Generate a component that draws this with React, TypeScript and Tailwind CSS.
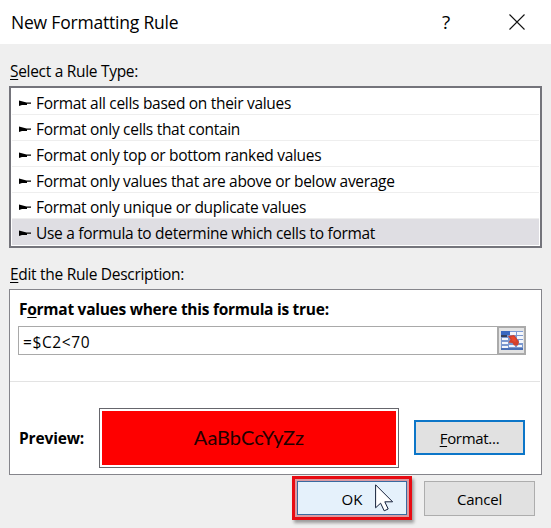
import React, { useState } from 'react';

const ruleTypes = [
  'Format all cells based on their values',
  'Format only cells that contain',
  'Format only top or bottom ranked values',
  'Format only values that are above or below average',
  'Format only unique or duplicate values',
  'Use a formula to determine which cells to format',
];

const PointerIcon = () => (
  <svg className="w-3 h-[7px] shrink-0" viewBox="0 0 12 7">
    <path d="M0 0.5 L7.5 2.5 H12 V3.7 H8 V5 H3 L0 6 Z" fill="#000" />
  </svg>
);

const CloseIcon = () => (
  <svg className="w-4 h-4" viewBox="0 0 16 16">
    <path d="M0.5 0.5 L15.5 15.5 M15.5 0.5 L0.5 15.5" stroke="#111" strokeWidth="1.1" fill="none" />
  </svg>
);

const RangePickerIcon = () => (
  <svg className="w-[22px] h-[19px]" viewBox="0 0 22 19">
    <rect width="22" height="19" fill="#7b98cf" />
    <rect width="9" height="4" fill="#3a68c0" />
    <rect x="9" width="13" height="1" fill="#7d9cd8" />
    <rect y="4" width="6" height="2" fill="#33415f" />
    <g fill="#f3f6fc">
      <rect x="9" y="1" width="6" height="3" />
      <rect x="16" y="1" width="6" height="3" />
      <rect x="1" y="7" width="6" height="2" />
      <rect x="16" y="5" width="6" height="3" />
      <rect x="1" y="11" width="6" height="2" />
      <rect x="18" y="9" width="4" height="3" />
      <rect x="1" y="15" width="6" height="2" />
      <rect x="8" y="14" width="6" height="2" />
      <rect x="16" y="14" width="5" height="2" />
    </g>
    <rect y="17" width="22" height="2" fill="#4a6fb5" />
    <path d="M7 5 L13 4 L15.5 7 L18 11 L17 14.5 L13 14.5 L11.5 12 L7.5 11.5 L9.5 8.5 Z" fill="#d2402c" />
    <path d="M10 6 L13 5.5 L15 9 L14.5 11.5 L11 9.5 Z" fill="#e9482f" />
  </svg>
);

const CursorIcon = () => (
  <svg className="w-[19px] h-[28px]" viewBox="0 0 19 28">
    <path
      d="M0.6 0.8 V23.8 L5.6 19.2 L9.2 26.8 L13.2 25 L9.8 17.8 H17.6 Z"
      fill="#fff"
      stroke="#15203a"
      strokeWidth="1"
    />
  </svg>
);

export default function App() {
  const [selectedRule, setSelectedRule] = useState(5);
  const [formula, setFormula] = useState('=$C2<70');

  return (
    <div className="w-[551px] h-[528px] overflow-hidden bg-[#efefef] text-black text-[15.5px] tracking-[-0.3px] leading-5 font-['Open_Sans','Noto_Sans',sans-serif]">
      {/* Title bar */}
      <div className="h-11 bg-white flex items-center pl-[11px] pr-[26px]">
        <h1 className="flex-1 text-[17.5px] tracking-[-0.2px] whitespace-nowrap">New Formatting Rule</h1>
        <button className="w-5 mr-[53px] text-[19px]">?</button>
        <button>
          <CloseIcon />
        </button>
      </div>

      <div className="pl-[9px] pr-[9px] pt-[17px]">
        <div className="h-[25px] pl-px">
          <span className="underline underline-offset-2">S</span>elect a Rule Type:
        </div>

        {/* Rule types */}
        <div className="h-[162px] border-2 border-[#74747b] bg-white px-px pt-px">
          {ruleTypes.map((rule, index) => (
            <button
              key={rule}
              onClick={() => setSelectedRule(index)}
              className={`flex w-full h-[26px] items-center gap-[5px] pl-[7px] pt-[3px] border-b text-left whitespace-nowrap ${
                selectedRule === index ? 'bg-[#dfdee3] border-[#dfdee3]' : 'border-[#eeeeee]'
              }`}
            >
              <PointerIcon />
              <span>{rule}</span>
            </button>
          ))}
        </div>

        <div className="h-[41px] pt-4 pl-px">
          <span className="underline underline-offset-2">E</span>dit the Rule Description:
        </div>

        {/* Rule description */}
        <div className="h-[186px] border border-[#85858b] bg-white">
          <div className="h-[92px] border-b border-[#e3e3e3] pl-2 pr-[14px] mr-px">
            <div className="h-9 pt-[9px] pl-px font-bold tracking-[-0.27px] whitespace-nowrap">
              F<span className="underline underline-offset-2">o</span>rmat values where this formula is true:
            </div>
            <div className="flex h-[29px] border border-[#a9a9a9]">
              <input
                value={formula}
                onChange={(e) => setFormula(e.target.value)}
                className="flex-1 min-w-0 pl-1 pt-0.5 tracking-[0.6px] outline-none"
              />
              <button className="-m-px w-[29px] border-2 border-[#aaaaaa] bg-[#e3e3e3] flex items-center justify-center">
                <RangePickerIcon />
              </button>
            </div>
          </div>

          <div className="flex items-start pl-[9px] pt-[26px]">
            <div className="w-20 pt-[20px] font-bold tracking-[-0.15px]">Preview:</div>
            <div className="w-[300px] h-[60px] border border-[#66666c] p-[2px]">
              <div className="h-full bg-[#fe0000] text-[#220000] flex items-center justify-center pb-0.5 text-[20px] tracking-normal font-['Lato',sans-serif]">
                AaBbCcYyZz
              </div>
            </div>
            <button className="mt-3 ml-[15px] w-[111px] h-[35px] border-2 border-[#0c76c8] bg-[#e1e1e1] text-[15px]">
              <span className="underline underline-offset-2">F</span>ormat...
            </button>
          </div>
        </div>
      </div>

      {/* Dialog buttons */}
      <div className="flex justify-end items-start gap-3 pr-4 pt-px">
        <div className="relative w-[120px] h-[44px] border-[3px] border-[#e80b12] bg-[#d99ba3] p-[2px] shadow-[2px_3px_3px_rgba(0,0,0,0.35)]">
          <button className="w-full h-full pt-0.5 border border-[#396a9f] bg-[#e5f1fb] text-[15px] tracking-normal">OK</button>
          <div className="absolute left-20 top-[5px]">
            <CursorIcon />
          </div>
        </div>
        <button className="mt-[5px] w-[111px] h-[35px] border border-[#adadad] bg-[#e1e1e1] text-[15px] tracking-[-0.2px]">
          Cancel
        </button>
      </div>
    </div>
  );
}
